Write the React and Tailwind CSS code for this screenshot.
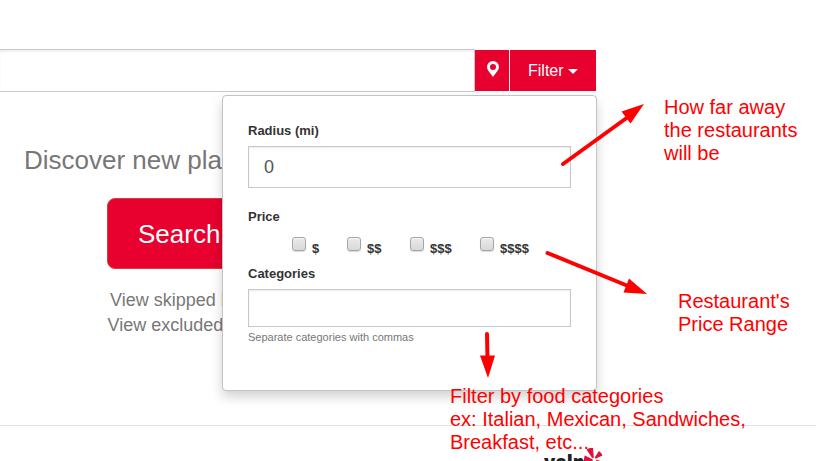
import React from "react";

const prices = [
  { label: "$", width: "w-[55px]" },
  { label: "$$", width: "w-[63px]" },
  { label: "$$$", width: "w-[70px]" },
  { label: "$$$$", width: "w-[60px]" },
];

function SearchBar() {
  return (
    <div className="flex h-[43px] items-center">
      <div className="h-[43px] w-[475px] border-y border-r border-[#c8c8c8] bg-white shadow-[inset_0_2px_2px_rgba(0,0,0,0.06)]" />
      <button className="flex h-[41px] w-[34px] items-center justify-center bg-[#e8002f]">
        <svg className="mb-[3px] ml-[1px] h-[16px] w-[12px]" viewBox="0 0 12 16" fill="#fff">
          <path
            fillRule="evenodd"
            d="M6 0a6 6 0 0 1 6 6c0 3.4-4 6.500-6 10C4 12.500 0 9.400 0 6a6 6 0 0 1 6-6Zm0 2.900a3 3 0 1 0 0 6 3 3 0 0 0 0-6Z"
          />
        </svg>
      </button>
      <button className="ml-px flex h-[41px] w-[86px] items-center bg-[#e8002f] pl-[18px] text-[16px] text-white">
        Filter
        <span className="ml-[4px] mt-[2px] border-x-[5px] border-t-[5px] border-x-transparent border-t-white" />
      </button>
    </div>
  );
}

function FilterMenu() {
  return (
    <div className="absolute left-[222px] top-[95px] h-[296px] w-[375px] rounded-[4px] border border-[#c3c3c3] bg-white px-[25px] pt-[25px] text-[13px] font-bold leading-[20px] text-[#333] shadow-[0_6px_12px_rgba(0,0,0,0.175)]">
      <div>Radius (mi)</div>
      <div className="mt-[5px] flex h-[42px] items-center border border-[#c8c8c8] pl-[15px] text-[18px] font-normal text-[#555] shadow-[inset_0_1px_2px_rgba(0,0,0,0.075)]">
        0
      </div>
      <div className="mt-[19px]">Price</div>
      <div className="mt-[9px] flex h-[24px] pl-[44px]">
        {prices.map((p) => (
          <label key={p.label} className={`flex shrink-0 ${p.width}`}>
            <span className="mt-[1px] h-[14px] w-[14px] shrink-0 rounded-[3px] border border-[#a5a5a5] bg-linear-to-b from-[#eaeaea] to-[#d9d9d9] shadow-[0_1px_1px_rgba(0,0,0,0.15),inset_0_1px_1px_rgba(255,255,255,0.7)]" />
            <span className="ml-[6px] mt-[3px]">{p.label}</span>
          </label>
        ))}
      </div>
      <div className="mt-[4px]">Categories</div>
      <div className="mt-[5px] h-[38px] border border-[#c8c8c8] shadow-[inset_0_1px_2px_rgba(0,0,0,0.075)]" />
      <div className="text-[11px] font-normal text-[#777]">Separate categories with commas</div>
    </div>
  );
}

function Arrows() {
  return (
    <svg className="absolute left-0 top-0 h-[461px] w-[816px]" viewBox="0 0 816 461" fill="#f00">
      <g stroke="#f00" strokeWidth="4" strokeLinecap="round">
        <path d="M563 164L628 117" />
        <path d="M547.500 253L628 286" />
        <path d="M487 334L487.500 358" />
      </g>
      <path d="M644 104L621.500 111.500L630.500 123.500Z" />
      <path d="M647 294L629 278.500L623.500 292.500Z" />
      <path d="M488 378L480 355.500L495 355.500Z" />
    </svg>
  );
}

function Note({ className, lines }) {
  return (
    <div className={`absolute whitespace-nowrap text-[20px] leading-[23px] text-[#f00] ${className}`}>
      {lines.map((line) => (
        <div key={line}>{line}</div>
      ))}
    </div>
  );
}

function YelpLogo() {
  return (
    <div className="flex h-[35px] items-start pl-[544px] pt-[22px]">
      <span className="mt-[4px] w-[40px] shrink-0 font-['Open_Sans'] text-[18.500px] font-extrabold leading-[20px] text-[#222]">
        yelp
      </span>
      <svg className="h-[26px] w-[20px] shrink-0" viewBox="0 0 20 26" fill="#dc1238">
        <path d="M2.500 1.500Q5.500-.5 9 0L9.800 9.500Q9 11 7.800 9.500Z" />
        <path d="M11 9L15 3Q17.500 4.500 18.500 7.500L12 10.500Q10.500 10.500 11 9Z" />
        <path d="M.8 7.500L8.500 11.200Q9.500 12.500 8 13L0 14.500Q-.5 11 .8 7.500Z" />
        <path d="M11.500 11.500L18.500 13.500L16 18Z" />
        <path d="M9.500 14L9.500 22L4 20Z" />
      </svg>
    </div>
  );
}

export default function App() {
  return (
    <div className="relative h-[461px] w-[816px] overflow-hidden bg-white pt-[49px] font-['Liberation_Sans',Arial,sans-serif]">
      <SearchBar />
      <main className="flex h-[333px] flex-col items-start whitespace-nowrap pt-[50px] text-[#777]">
        <h1 className="ml-[24px] text-[26px] leading-[36px]">Discover new places</h1>
        <button className="ml-[107px] mt-[20px] flex h-[71px] w-[200px] items-center rounded-[8px] border border-[#d43f3a] bg-[#e8002f] pl-[30px] pt-[2px] text-[26px] text-white">
          <span>Search</span>
        </button>
        <div className="mt-[19px] pl-[110px] text-[18px] leading-[25px]">View skipped businesses</div>
        <div className="pl-[107.500px] text-[18px] leading-[25px]">View excluded categories</div>
      </main>
      <footer className="h-[36px] border-t border-[#e2e2e2]">
        <YelpLogo />
      </footer>
      <FilterMenu />
      <Arrows />
      <Note className="left-[664px] top-[96px]" lines={["How far away", "the restaurants", "will be"]} />
      <Note className="left-[678px] top-[290px]" lines={["Restaurant's", "Price Range"]} />
      <Note
        className="left-[450px] top-[385px]"
        lines={["Filter by food categories", "ex: Italian, Mexican, Sandwiches,", "Breakfast, etc..."]}
      />
    </div>
  );
}
